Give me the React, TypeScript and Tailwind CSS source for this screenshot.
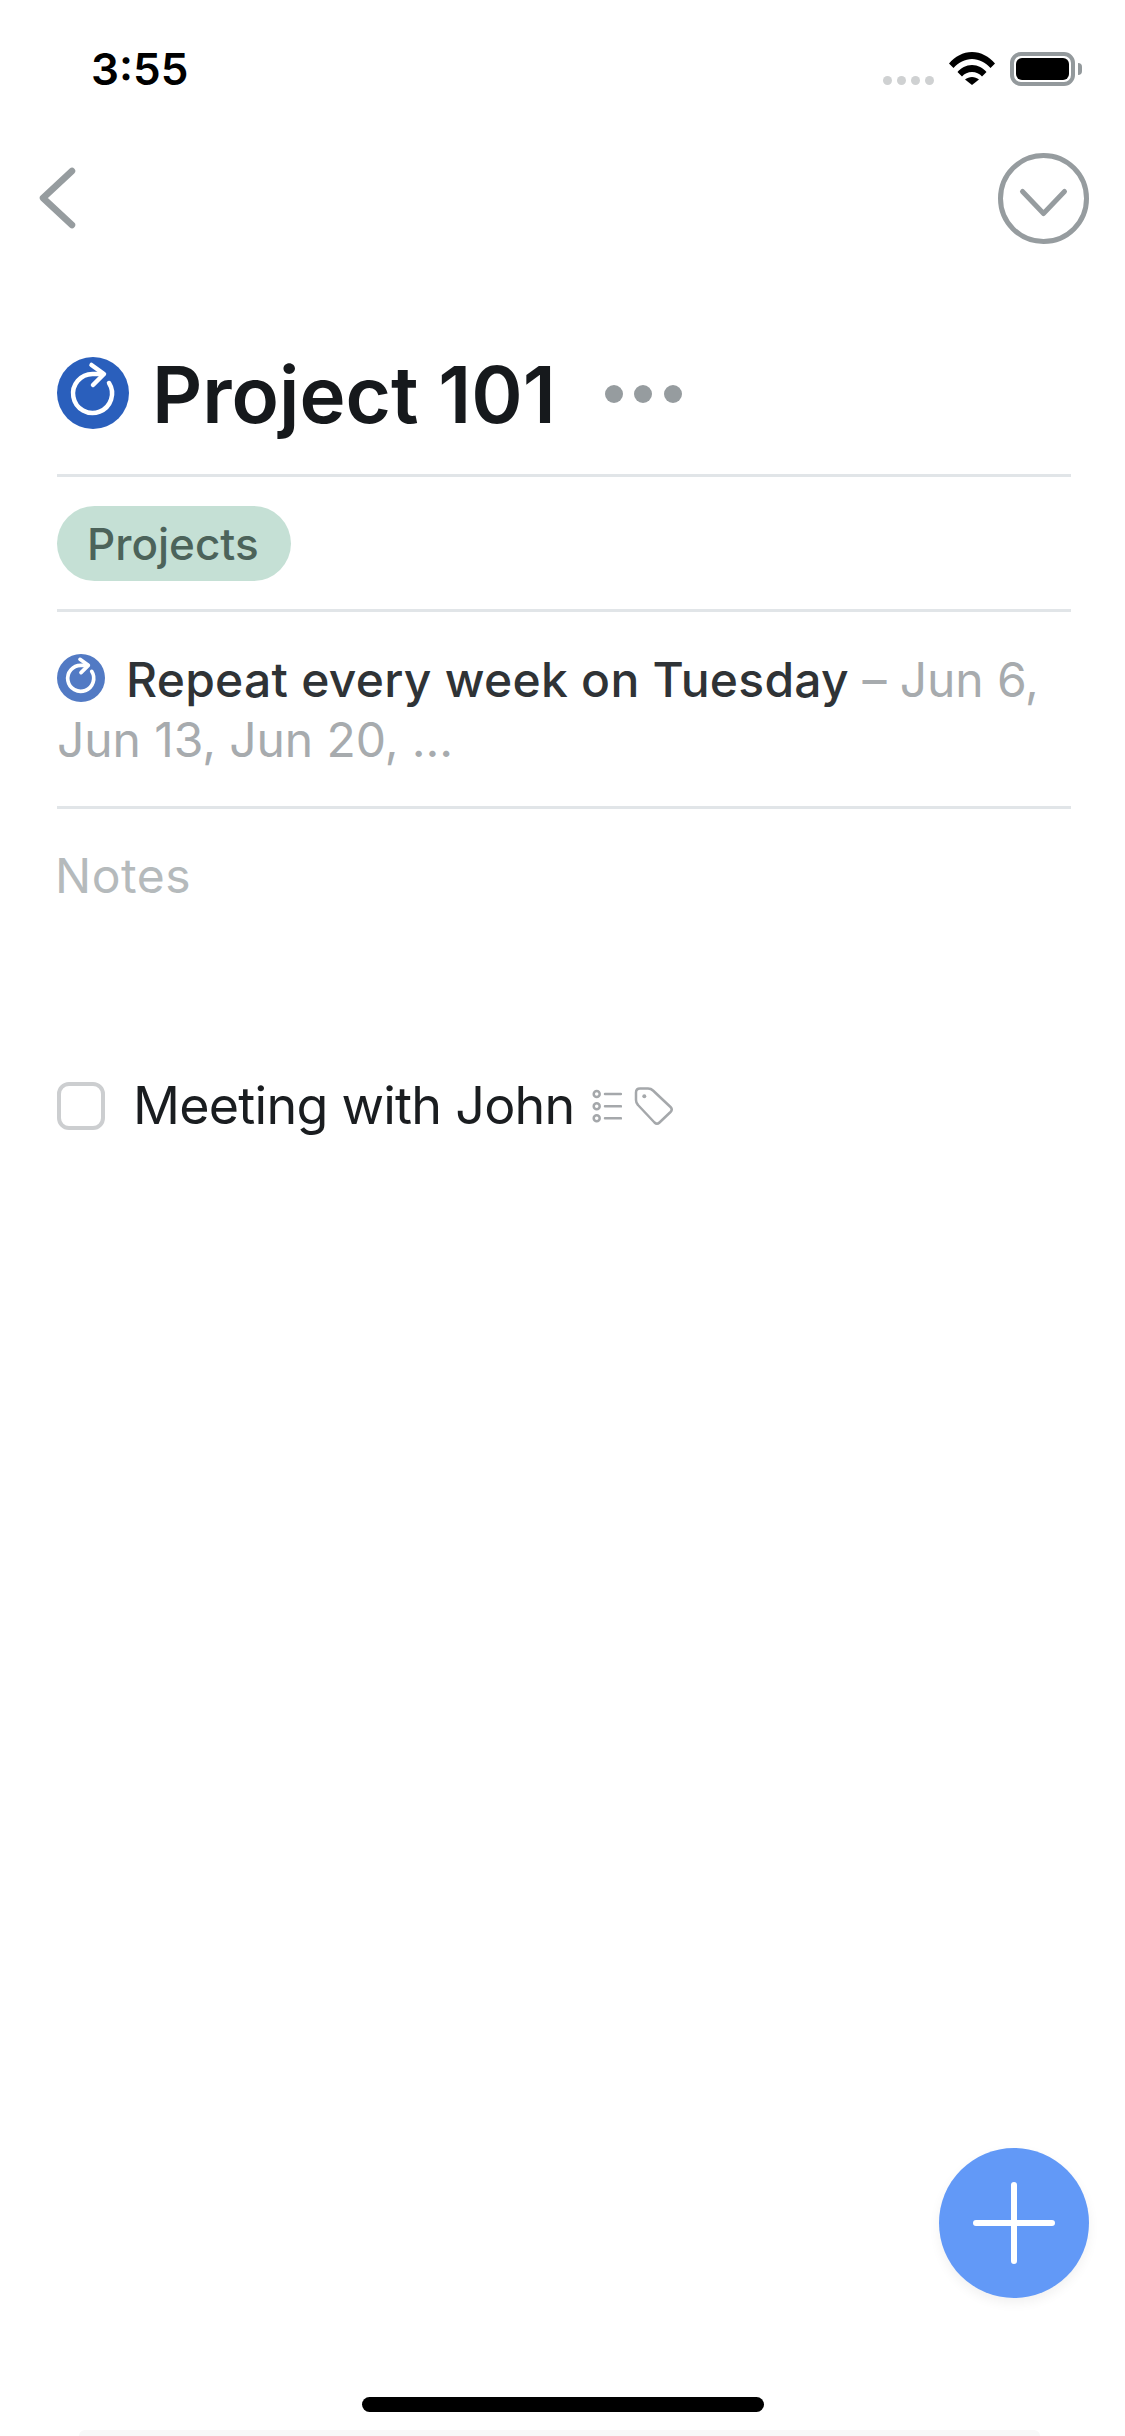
function RepeatIcon({ className, color, stroke }: { className: string; color: string; stroke: number }) {
  return (
    <svg viewBox="0 0 72 72" className={className}>
      <circle cx="36" cy="36" r="36" fill={color} />
      <path d="M46 17H36A19.500 19.500 0 1 0 52 26" fill="none" stroke="#fff" strokeWidth={stroke} strokeLinecap="round" />
      <path d="M34.500 8L47 17L36 28" fill="none" stroke="#fff" strokeWidth={stroke} strokeLinecap="round" strokeLinejoin="round" />
    </svg>
  );
}

function StatusBar() {
  return (
    <div className="flex h-[138px] items-start justify-between pl-[91px] pr-[43px] pt-[43px]">
      <span className="text-[44px] leading-[52px] font-semibold text-black">3:55</span>
      <div className="-mt-[3px] flex items-start pt-[12px]">
        <div className="mt-[24px] flex gap-[5px]">
          <div className="size-[9px] rounded-full bg-[#cfd1d2]" />
          <div className="size-[9px] rounded-full bg-[#cfd1d2]" />
          <div className="size-[9px] rounded-full bg-[#cfd1d2]" />
          <div className="size-[9px] rounded-full bg-[#cfd1d2]" />
        </div>
        <svg viewBox="0 0 46 33" className="ml-[15px] h-[33px] w-[46px]">
          <path d="M0 11.500C6 4.500 14 0 23 0C32 0 40 4.500 46 11.500L41.500 16C36.500 10.500 30 7 23 7C16 7 9.500 10.500 4.500 16Z" fill="#000" />
          <path d="M8.500 20C12 16 17 13 23 13C29 13 34 16 37.500 20L33 24.500C30.500 21.500 27 20 23 20C19 20 15.500 21.500 13 24.500Z" fill="#000" />
          <path d="M16 27.500C18 26 20.500 25 23 25C25.500 25 28 26 30 27.500L23 33Z" fill="#000" />
        </svg>
        <div className="ml-[15px] flex items-center">
          <div className="h-[34px] w-[65px] rounded-[11px] border-[4px] border-[#93999c] p-[2px]">
            <div className="h-full w-full rounded-[6px] bg-black" />
          </div>
          <div className="ml-[3px] h-[12px] w-[4px] rounded-r-full bg-[#93999c]" />
        </div>
      </div>
    </div>
  );
}

function NavBar() {
  return (
    <div className="flex h-[105px] items-start justify-between pl-[37px] pr-[36px] pt-[15px]">
      <svg viewBox="0 0 40 64" className="mt-[13px] h-[64px] w-[40px]">
        <path d="M35 5L6 32L35 59" fill="none" stroke="#969c9f" strokeWidth="6.500" strokeLinecap="round" strokeLinejoin="round" />
      </svg>
      <svg viewBox="0 0 91 91" className="size-[91px]">
        <circle cx="45.500" cy="45.500" r="43" fill="none" stroke="#969c9f" strokeWidth="5" />
        <path d="M24.500 38.500L45.500 60.500L66.500 38.500" fill="none" stroke="#969c9f" strokeWidth="5" strokeLinecap="round" strokeLinejoin="round" />
      </svg>
    </div>
  );
}

function TitleRow() {
  return (
    <div className="flex h-[234px] items-start border-b-[3px] border-[#e1e5e8] pt-[107px]">
      <RepeatIcon className="mt-[7px] size-[72px] shrink-0" color="#2a5fbc" stroke={4.5} />
      <h1 className="ml-[23px] text-[78px] leading-[90px] font-semibold text-[#16191c]">Project 101</h1>
      <div className="ml-[49px] mt-[35px] flex gap-[11.5px]">
        <div className="size-[18px] rounded-full bg-[#969c9f]" />
        <div className="size-[18px] rounded-full bg-[#969c9f]" />
        <div className="size-[18px] rounded-full bg-[#969c9f]" />
      </div>
    </div>
  );
}

function TaskRow() {
  return (
    <div className="mt-[170px] flex h-[60px] items-center">
      <div className="size-[48px] shrink-0 rounded-[12px] border-[4px] border-[#ccced0]" />
      <span className="ml-[28px] text-[52px] leading-[60px] tracking-[-0.75px] text-[#1a1d20]">Meeting with John</span>
      <svg viewBox="0 0 30 34" className="ml-[17px] h-[34px] w-[30px]" fill="none" stroke="#a5a8ab" strokeWidth="2.500">
        <circle cx="4.700" cy="5" r="3" />
        <circle cx="4.700" cy="17.300" r="3" />
        <circle cx="4.700" cy="29.300" r="3" />
        <path d="M13 5H29M13 17.300H29M13 29.300H29" strokeLinecap="round" />
      </svg>
      <svg viewBox="0 0 40 40" className="ml-[12px] size-[40px]" fill="none" stroke="#a5a8ab" strokeWidth="2.500">
        <path d="M6 2.500H14Q17 2.500 19 4.500L36.500 21Q39 23.500 36.500 26L25.500 36.500Q23 39 20.500 36.500L4 19Q2 17 2 14V6.500Q2 2.500 6 2.500Z" />
        <circle cx="10.300" cy="10.300" r="2" fill="#a5a8ab" stroke="none" />
      </svg>
    </div>
  );
}

export default function App() {
  return (
    <div className="relative h-[2436px] w-[1125px] overflow-hidden bg-white font-['Inter','Noto_Sans',sans-serif]">
      <StatusBar />
      <NavBar />
      <div className="pl-[57px] pr-[54px]">
        <TitleRow />
        <div className="flex h-[135px] items-start border-b-[3px] border-[#e1e5e8] pt-[29px]">
          <span className="flex h-[75px] w-[234px] items-center rounded-full bg-[#c5e0d5] pl-[30px] text-[44px] font-medium text-[#4c635a]">Projects</span>
        </div>
        <div className="h-[197px] border-b-[3px] border-[#e1e5e8] pt-[38px] text-[48px] leading-[60px] tracking-[-0.1px] text-[#a7abae]">
          <RepeatIcon className="mr-[21px] inline-block size-[48px] align-[-5px]" color="#527ac4" stroke={5.5} />
          <span className="font-medium tracking-[0.27px] text-[#2f3336]">Repeat every week on Tuesday</span> – Jun 6, Jun 13, Jun 20, ...
        </div>
        <div className="-ml-[2px] pt-[37px] text-[48px] leading-[60px] tracking-[0.5px] text-[#b5babc]">Notes</div>
        <TaskRow />
      </div>
      {/* floating add button */}
      <div className="absolute left-[939px] top-[2148px] flex size-[150px] items-center justify-center rounded-full bg-[#6299f7] shadow-[0_5px_12px_rgba(0,0,0,0.06)]">
        <svg viewBox="0 0 82 82" className="size-[82px]">
          <path d="M41 3V79M3 41H79" fill="none" stroke="#fff" strokeWidth="6" strokeLinecap="round" />
        </svg>
      </div>
      <div className="absolute left-[362px] top-[2397px] h-[15px] w-[402px] rounded-full bg-black" />
      <div className="absolute bottom-0 left-[79px] h-[6px] w-[961px] rounded-t-[8px] bg-[#f8f8f8]" />
    </div>
  );
}
